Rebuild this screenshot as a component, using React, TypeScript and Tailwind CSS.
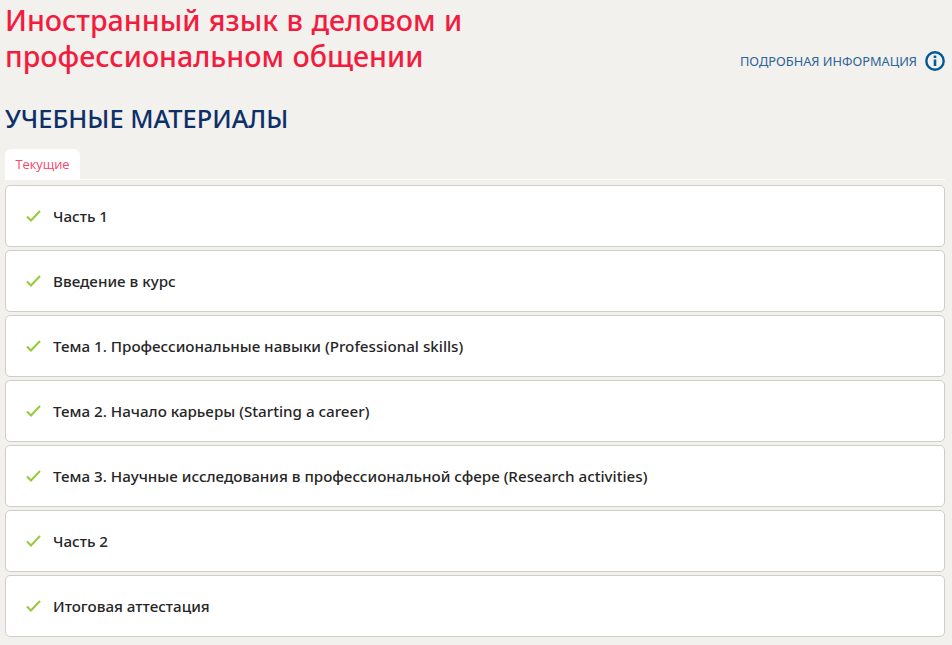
const items = [
  "Часть 1",
  "Введение в курс",
  "Тема 1. Профессиональные навыки (Professional skills)",
  "Тема 2. Начало карьеры (Starting a career)",
  "Тема 3. Научные исследования в профессиональной сфере (Research activities)",
  "Часть 2",
  "Итоговая аттестация",
];

function Check() {
  return (
    <svg width="15" height="12" viewBox="0 0 15 12" fill="none" className="shrink-0">
      <path d="M1 6.5 L5 10.5 L14 1" stroke="#97c93d" strokeWidth="2" />
    </svg>
  );
}

function Info() {
  return (
    <svg width="20" height="20" viewBox="0 0 20 20" fill="none" className="shrink-0">
      <circle cx="10" cy="10" r="8.7" stroke="#005a96" strokeWidth="2.4" />
      <rect x="8.7" y="8.5" width="2.6" height="6.5" fill="#005a96" />
      <rect x="8.7" y="4.6" width="2.6" height="2.4" fill="#005a96" />
    </svg>
  );
}

export default function App() {
  return (
    <div className="w-[952px] h-[645px] overflow-hidden bg-[#f3f1ee] font-['Noto_Sans',sans-serif]">
      <div className="flex items-end justify-between w-[940px] ml-[5px] pt-[2px]">
        <h1 className="w-[500px] text-[28.6px] leading-[36px] font-medium [word-spacing:1px] text-[#f21c3f]">
          Иностранный язык в деловом и профессиональном общении
        </h1>
        <div className="flex items-center gap-[8px] mb-[3px] h-[20px]">
          <span className="text-[12.8px] text-[#2c6496] leading-[20px]">ПОДРОБНАЯ ИНФОРМАЦИЯ</span>
          <Info />
        </div>
      </div>
      <h2 className="pl-[5px] mt-[27px] text-[25.4px] leading-[34px] font-medium text-[#0d3069]">
        УЧЕБНЫЕ МАТЕРИАЛЫ
      </h2>
      <div className="ml-[5px] w-[940px] mt-[14px] border-b border-white h-[31px]">
        <div className="w-[75px] h-[30px] pt-[1px] rounded-t-[6px] bg-white flex items-center justify-center text-[12.8px] font-['Open_Sans',sans-serif] text-[#f4476a]">
          Текущие
        </div>
      </div>
      <div className="flex flex-col gap-[3px] ml-[5px] w-[940px] mt-[5px]">
        {items.map((t) => (
          <div
            key={t}
            className="h-[62px] bg-white border border-[#cfcdc9] rounded-[5px] flex items-center gap-[12px] pl-[20px]"
          >
            <Check />
            <span className="text-[15.2px] font-medium text-[#262626]">{t}</span>
          </div>
        ))}
      </div>
    </div>
  );
}
